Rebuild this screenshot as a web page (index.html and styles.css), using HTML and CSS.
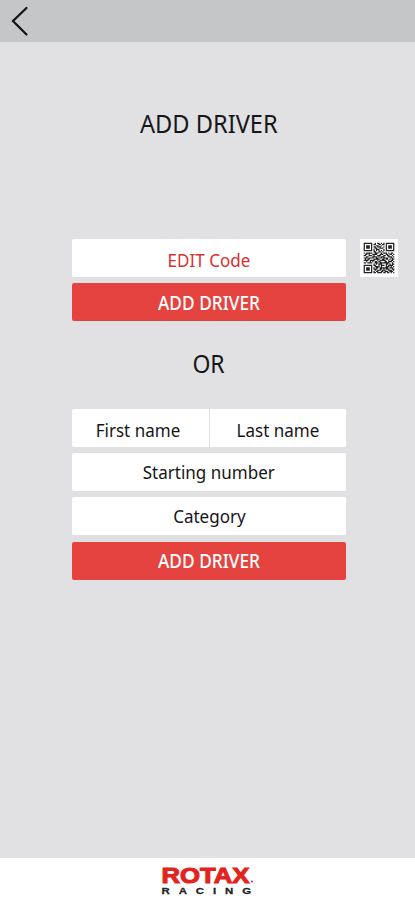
FILE: index.html
```
<!DOCTYPE html>
<html lang="en">
<head>
<meta charset="utf-8">
<title>Add driver</title>
<link rel="stylesheet" href="styles.css">
</head>
<body>
<header class="bar">
  <svg class="back" viewBox="0 0 20 32" aria-hidden="true"><path d="M16.5 3L3 16L16.5 29.5"/></svg>
</header>
<main class="content">
  <h1 class="title"><span class="t-title">ADD DRIVER</span></h1>
  <section class="group">
    <div class="field code"><span>EDIT Code</span>
      <svg class="qr" viewBox="-3 -3 31 31" aria-hidden="true"><path id="modules"/></svg>
    </div>
    <div class="button"><span>ADD DRIVER</span></div>
  </section>
  <h2 class="or"><span>OR</span></h2>
  <section class="group details">
    <div class="names">
      <div class="field first"><span>First name</span></div>
      <div class="field last"><span>Last name</span></div>
    </div>
    <div class="field single"><span>Starting number</span></div>
    <div class="field single"><span>Category</span></div>
    <div class="button"><span>ADD DRIVER</span></div>
  </section>
</main>
<footer class="footer">
  <svg class="logo" viewBox="0 0 96 42">
    <text class="rotax" x="1.5" y="24.5" textLength="88" lengthAdjust="spacingAndGlyphs">ROTAX</text>
    <circle class="dot" cx="92" cy="23.5" r="1"/>
    <text class="racing" transform="translate(1.5 36) scale(1.3 1)" x="0" y="0" textLength="69">RACING</text>
  </svg>
</footer>
<script src="qr.js"></script>
</body>
</html>
```
FILE: styles.css
```
* { box-sizing: border-box; }
body {
  margin: 0;
  height: 900px;
  display: flex;
  flex-direction: column;
  background: #e1e1e3;
  color: #161617;
  font-family: "Noto Sans", sans-serif;
}
.bar {
  height: 42px;
  background: #c5c6c8;
  padding: 5px 0 0 10px;
}
.back { display: block; width: 20px; height: 32px; }
.back path { fill: none; stroke: #111; stroke-width: 2.2; stroke-linecap: round; }
.content { flex: 1; padding: 0 69px 0 72px; }
.title, .or {
  margin: 0;
  font-weight: 400;
  font-size: 25px;
  line-height: 36px;
  text-align: center;
}
.title { padding-top: 63px; margin-bottom: 98px; }
.or { margin: 24px 0 27.5px; }
.group { display: flex; flex-direction: column; gap: 6px; }
.details { gap: 6.4px; }
.field, .button {
  height: 38px;
  display: flex;
  align-items: center;
  justify-content: center;
  border-radius: 2px;
  font-size: 18.5px;
  line-height: 26px;
}
.field { background: #fff; padding-top: 4px; }
.single { padding-top: 0; }
.button { background: #e4433f; color: #fff; font-weight: 500; font-size: 19px; padding-top: 1px; }
.names { display: grid; grid-template-columns: 136.5px 1fr; gap: 1.5px; }
.first { border-radius: 2px 0 0 2px; padding-right: 4px; }
.last { border-radius: 0 2px 2px 0; }
.code { position: relative; color: #d9302f; }
.qr {
  position: absolute;
  left: 288px;
  top: 0;
  width: 38px;
  height: 38px;
  background: #fff;
}
.qr path { fill: #222; }
span { display: inline-block; white-space: nowrap; transform: scaleX(0.92); }
.t-title { transform: scaleX(0.945); }
.button span { transform: scaleX(0.91); }
.footer {
  height: 42px;
  background: #fff;
  display: flex;
  justify-content: center;
}
.logo { width: 96px; height: 42px; }
.rotax { font: 700 22.5px "Liberation Sans", sans-serif; fill: #e22420; stroke: #e22420; stroke-width: 1.1; }
.racing { font: 700 8.8px "Liberation Sans", sans-serif; fill: #222; stroke: #222; stroke-width: 0.25; }
.dot { fill: #e22420; }
```
FILE: qr.js
```
const rows = [
  "1111111001011010101111111",
  "1000001011001101101000001",
  "1011101000110010001011101",
  "1011101011011100101011101",
  "1011101001100111001011101",
  "1000001010111000101000001",
  "1111111010101010101111111",
  "0000000011001101000000000",
  "1011111001110010111010110",
  "0110100111100111001101101",
  "1100111010011100110110010",
  "0011000111101011100011101",
  "1110111100110110111100110",
  "0101100011111001101101011",
  "1111011110010111110010110",
  "0010010101101100011011101",
  "1101111001110111111110010",
  "0000000010101110001101011",
  "1111111011001011101011110",
  "1000001001111010001110101",
  "1011101010110111111101110",
  "1011101011100110101110011",
  "1011101001011101110011101",
  "1000001010110011011101110",
  "1111111011011110110110101"
];
let path = "";
rows.forEach((row, y) => [...row].forEach((bit, x) => {
  if (bit === "1") path += `M${x} ${y}h1v1h-1z`;
}));
document.getElementById("modules").setAttribute("d", path);
```
